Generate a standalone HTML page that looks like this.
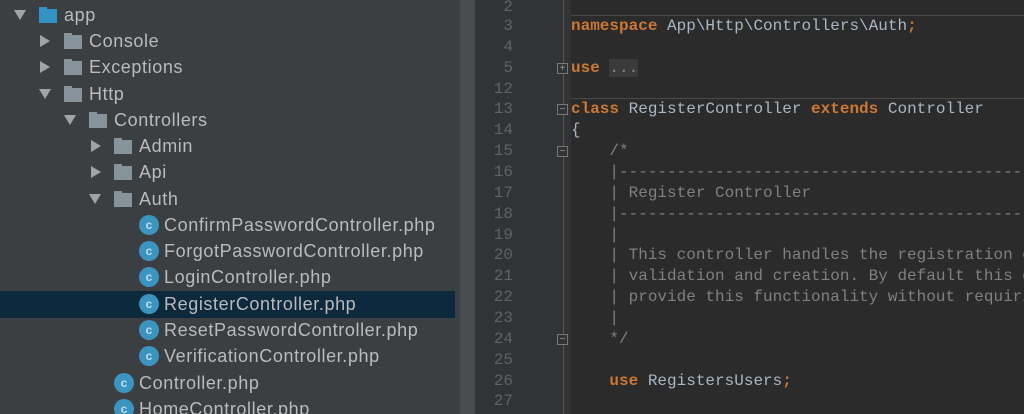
<!DOCTYPE html>
<html><head><meta charset="utf-8"><style>
*{margin:0;padding:0;box-sizing:border-box}
html{overflow:hidden;width:1024px;height:414px}
body{width:1024px;height:414px;overflow:hidden;background:#2b2b2b;position:relative;font-family:"Liberation Sans",sans-serif}
#side{position:absolute;left:0;top:0;width:460px;height:414px;background:#3c3f41;overflow:hidden}
#sb{position:absolute;left:460px;top:0;width:15px;height:414px;background:#4a4d4f}
#gut{position:absolute;left:475px;top:0;width:96px;height:414px;background:#313335}
#gl{position:absolute;left:563px;top:0;width:1px;height:414px;background:#555}
#ed{position:absolute;left:0;top:0;width:1024px;height:414px;overflow:hidden}
.r{position:absolute;height:26px;line-height:26px;font-size:18px;letter-spacing:0.6px;color:#bbbbbb;white-space:nowrap}
.sel{position:absolute;left:0;top:291px;width:455px;height:27px;background:#0d293e}
.tri{position:absolute;width:0;height:0}
.down{border-left:6px solid transparent;border-right:6px solid transparent;border-top:10px solid #a0a4a6}
.right{border-top:6px solid transparent;border-bottom:6px solid transparent;border-left:10px solid #a0a4a6}
.fold{position:absolute;width:18px;height:14px;background:#87939a}
.fold:before{content:"";position:absolute;left:0;top:-2px;width:8px;height:3px;background:#87939a}
.blue,.blue:before{background:#3592c4}
.ci{position:absolute;width:20px;height:20px;border-radius:50%;background:#3a95c0;color:#c8dbe5;font-size:12px;line-height:20px;text-align:center;font-weight:bold}
.ln{position:absolute;left:475px;width:38px;text-align:right;font-family:"Liberation Mono",monospace;font-size:16px;color:#606366;height:21px;line-height:21px}
.cd{position:absolute;left:571px;font-family:"Liberation Mono",monospace;font-size:16px;color:#a9b7c6;height:21px;line-height:21px;white-space:pre}
.k{color:#cc7832;font-weight:bold}
.c{color:#808080}
.hr{position:absolute;left:571px;width:453px;height:1px;background:#4a4a4a}
.fm{position:absolute;left:557px;width:11px;height:11px;border:1px solid #777;background:#313335;color:#999;font-size:10px;line-height:9px;text-align:center}
</style></head><body>
<div id="side">
<div class="sel"></div>
<div class="tri down" style="left:14px;top:10px"></div>
<div class="fold blue" style="left:39px;top:9px"></div>
<div class="r" style="left:64px;top:2px">app</div>
<div class="tri right" style="left:40px;top:35px"></div>
<div class="fold" style="left:64px;top:35px"></div>
<div class="r" style="left:89px;top:28px">Console</div>
<div class="tri right" style="left:40px;top:61px"></div>
<div class="fold" style="left:64px;top:61px"></div>
<div class="r" style="left:89px;top:54px">Exceptions</div>
<div class="tri down" style="left:39px;top:89px"></div>
<div class="fold" style="left:64px;top:88px"></div>
<div class="r" style="left:89px;top:81px">Http</div>
<div class="tri down" style="left:64px;top:115px"></div>
<div class="fold" style="left:89px;top:114px"></div>
<div class="r" style="left:114px;top:107px">Controllers</div>
<div class="tri right" style="left:91px;top:140px"></div>
<div class="fold" style="left:114px;top:140px"></div>
<div class="r" style="left:139px;top:133px">Admin</div>
<div class="tri right" style="left:91px;top:166px"></div>
<div class="fold" style="left:114px;top:166px"></div>
<div class="r" style="left:139px;top:159px">Api</div>
<div class="tri down" style="left:89px;top:194px"></div>
<div class="fold" style="left:114px;top:193px"></div>
<div class="r" style="left:139px;top:186px">Auth</div>
<div class="ci" style="left:139px;top:215px">c</div><div class="r" style="left:164px;top:212px">ConfirmPasswordController.php</div>
<div class="ci" style="left:139px;top:241px">c</div><div class="r" style="left:164px;top:238px">ForgotPasswordController.php</div>
<div class="ci" style="left:139px;top:267px">c</div><div class="r" style="left:164px;top:264px">LoginController.php</div>
<div class="ci" style="left:139px;top:294px">c</div><div class="r" style="left:164px;top:291px">RegisterController.php</div>
<div class="ci" style="left:139px;top:320px">c</div><div class="r" style="left:164px;top:317px">ResetPasswordController.php</div>
<div class="ci" style="left:139px;top:346px">c</div><div class="r" style="left:164px;top:343px">VerificationController.php</div>
<div class="ci" style="left:114px;top:373px">c</div><div class="r" style="left:139px;top:370px">Controller.php</div>
<div class="ci" style="left:114px;top:399px">c</div><div class="r" style="left:139px;top:396px">HomeController.php</div>
</div>
<div id="sb"></div>
<div id="gut"></div>
<div id="gl"></div>
<div id="ed">
<div class="hr" style="top:15px"></div>
<div class="hr" style="top:98px"></div>
<div class="ln" style="top:-3px">2</div>
<div class="ln" style="top:16px">3</div><div class="cd" style="top:16px"><span class="k">namespace</span> App\Http\Controllers\Auth<span class="k">;</span></div>
<div class="ln" style="top:37px">4</div>
<div class="ln" style="top:58px">5</div><div class="cd" style="top:58px"><span class="k">use</span> <span style="background:#3b3b3b;color:#888">...</span></div>
<div class="fm" style="top:63px">+</div>
<div class="ln" style="top:79px">12</div>
<div class="ln" style="top:99px">13</div><div class="cd" style="top:99px"><span class="k">class</span> RegisterController <span class="k">extends</span> Controller</div>
<div class="fm" style="top:104px">−</div>
<div class="ln" style="top:120px">14</div><div class="cd" style="top:120px">{</div>
<div class="ln" style="top:141px">15</div><div class="cd c" style="top:141px">    /*</div>
<div class="fm" style="top:146px">−</div>
<div class="ln" style="top:162px">16</div><div class="cd c" style="top:162px">    |----------------------------------------------</div>
<div class="ln" style="top:183px">17</div><div class="cd c" style="top:183px">    | Register Controller</div>
<div class="ln" style="top:204px">18</div><div class="cd c" style="top:204px">    |----------------------------------------------</div>
<div class="ln" style="top:225px">19</div><div class="cd c" style="top:225px">    |</div>
<div class="ln" style="top:245px">20</div><div class="cd c" style="top:245px">    | This controller handles the registration of</div>
<div class="ln" style="top:266px">21</div><div class="cd c" style="top:266px">    | validation and creation. By default this co</div>
<div class="ln" style="top:287px">22</div><div class="cd c" style="top:287px">    | provide this functionality without requirin</div>
<div class="ln" style="top:308px">23</div><div class="cd c" style="top:308px">    |</div>
<div class="ln" style="top:329px">24</div><div class="cd c" style="top:329px">    */</div>
<div class="fm" style="top:334px">−</div>
<div class="ln" style="top:350px">25</div>
<div class="ln" style="top:371px">26</div><div class="cd" style="top:371px">    <span class="k">use</span> RegistersUsers<span class="k">;</span></div>
<div class="ln" style="top:391px">27</div>
</div>
</body></html>
